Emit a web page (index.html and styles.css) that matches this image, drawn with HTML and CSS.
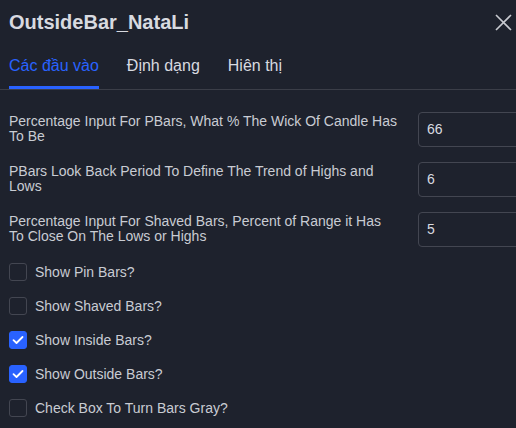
FILE: index.html
```html
<!DOCTYPE html>
<html>
<head>
<meta charset="utf-8">
<link rel="stylesheet" href="styles.css">
</head>
<body>
<div class="dialog">
  <div class="header">
    <div class="title">OutsideBar_NataLi</div>
    <svg class="close" width="17" height="17" viewBox="0 0 17 17"><path d="M1 1L16 16M16 1L1 16" stroke="#c8cad0" stroke-width="1.6" fill="none"/></svg>
  </div>
  <div class="tabs">
    <div class="tab active">Các đầu vào</div>
    <div class="tab">Định dạng</div>
    <div class="tab">Hiên thị</div>
  </div>
  <div class="content">
    <div class="row">
      <div class="label">Percentage Input For PBars, What % The Wick Of Candle Has To Be</div>
      <div class="input">66</div>
    </div>
    <div class="row">
      <div class="label">PBars Look Back Period To Define The Trend of Highs and Lows</div>
      <div class="input">6</div>
    </div>
    <div class="row last">
      <div class="label">Percentage Input For Shaved Bars, Percent of Range it Has<br>To Close On The Lows or Highs</div>
      <div class="input">5</div>
    </div>
    <div class="checks">
      <div class="check"><span class="box"></span><span>Show Pin Bars?</span></div>
      <div class="check"><span class="box"></span><span>Show Shaved Bars?</span></div>
      <div class="check"><span class="box on"><svg width="12" height="10" viewBox="0 0 12 10"><path d="M1.5 5.2L4.5 8L10.5 2" stroke="#fff" stroke-width="1.8" fill="none" stroke-linecap="round" stroke-linejoin="round"/></svg></span><span>Show Inside Bars?</span></div>
      <div class="check"><span class="box on"><svg width="12" height="10" viewBox="0 0 12 10"><path d="M1.5 5.2L4.5 8L10.5 2" stroke="#fff" stroke-width="1.8" fill="none" stroke-linecap="round" stroke-linejoin="round"/></svg></span><span>Show Outside Bars?</span></div>
      <div class="check"><span class="box"></span><span>Check Box To Turn Bars Gray?</span></div>
    </div>
  </div>
</div>
</body>
</html>
```

FILE: styles.css
```css
html, body {
  margin: 0;
  padding: 0;
  background: #1e222d;
}
body {
  font-family: "Liberation Sans", Arial, sans-serif;
  color: #d1d4dc;
  width: 516px;
  height: 428px;
  overflow: hidden;
}
.dialog {
  display: flex;
  flex-direction: column;
}
.header {
  display: flex;
  justify-content: space-between;
  align-items: center;
  padding: 9px 4px 0 9px;
  height: 25px;
}
.title {
  font-size: 20px;
  font-weight: bold;
  line-height: 24px;
  color: #d8dae0;
}
.close {
  margin-top: 2px;
}
.tabs {
  display: flex;
  gap: 28px;
  padding: 0 9px;
  margin-top: 19px;
  border-bottom: 1px solid #3b3e48;
}
.tab {
  font-size: 16px;
  line-height: 20px;
  padding: 3px 0 10px;
  color: #d8dae0;
  border-bottom: 3px solid transparent;
}
.tab.active {
  color: #2962ff;
  border-bottom-color: #2962ff;
}
.content {
  padding: 22px 0 0 9px;
  display: flex;
  flex-direction: column;
}
.row {
  display: flex;
  align-items: flex-start;
  justify-content: space-between;
  height: 50px;
}
.row.last {
  height: 43px;
}
.label {
  width: 395px;
  font-size: 14px;
  line-height: 15px;
  padding-top: 2px;
  color: #c9ccd3;
}
.input {
  box-sizing: border-box;
  width: 110px;
  height: 35px;
  margin-right: -12px;
  border: 1px solid #434651;
  border-radius: 4px;
  padding: 0 8px;
  font-size: 14px;
  line-height: 33px;
  color: #d8dae0;
}
.checks {
  display: flex;
  flex-direction: column;
}
.check {
  display: flex;
  align-items: center;
  gap: 8px;
  height: 34px;
  font-size: 14px;
  color: #c9ccd3;
}
.box {
  box-sizing: border-box;
  width: 18px;
  height: 18px;
  border: 1px solid #434651;
  border-radius: 3px;
  display: flex;
  align-items: center;
  justify-content: center;
}
.box.on {
  background: #2962ff;
  border-color: #2962ff;
}
```
